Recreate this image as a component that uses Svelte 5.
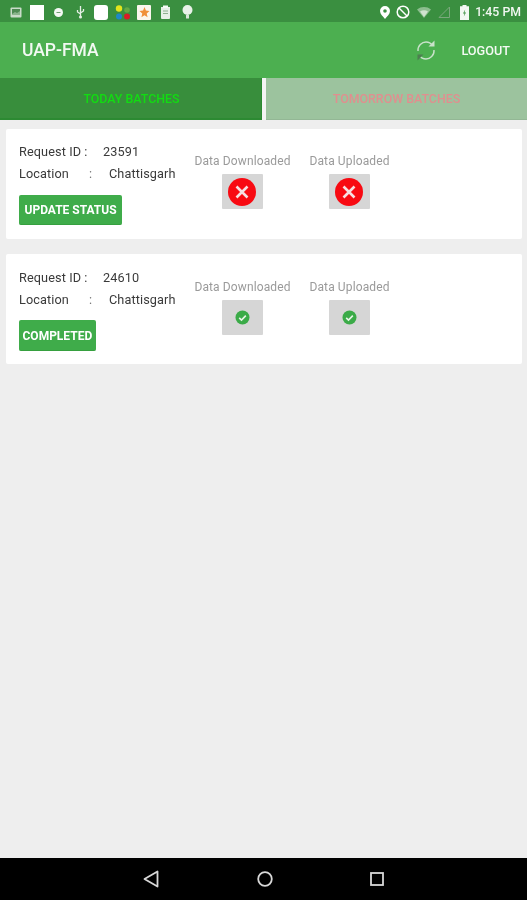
<script>
  const batches = [
    { id: "23591", location: "Chattisgarh", action: "UPDATE STATUS", done: false },
    { id: "24610", location: "Chattisgarh", action: "COMPLETED", done: true }
  ];
</script>

<div class="screen">
  <div class="statusbar">
    <div class="notifs">
      <svg class="n-img" width="12" height="11" viewBox="0 0 12 11"><rect x="0.5" y="0.5" width="11" height="10" rx="1" fill="#c9dcc9"/><path d="M2 2h8v5H2z" fill="#4d8a52"/><path d="M2 7l3-2 2 1 3-2v4H2z" fill="#8ab58c"/></svg>
      <span class="blank sq"></span>
      <svg class="n-dot" width="9" height="9" viewBox="0 0 9 9"><circle cx="4.5" cy="4.5" r="4.5" fill="#f4f8f4"/><path d="M2.5 4.5h4" stroke="#6f9f72" stroke-width="1"/></svg>
      <svg class="n-usb" width="9" height="14" viewBox="0 0 9 14"><path d="M4.5 1v12M4.5 9L1.5 7V5M4.5 8L7.5 6V4" fill="none" stroke="#e6f0e6" stroke-width="1.3"/><circle cx="4.5" cy="12" r="1.5" fill="#e6f0e6"/></svg>
      <span class="blank rnd"></span>
      <svg class="n-apps" width="16" height="15" viewBox="0 0 16 15"><circle cx="4" cy="3.5" r="3.2" fill="#e4e41c"/><circle cx="12" cy="5" r="2.8" fill="#64a844"/><circle cx="4" cy="11.5" r="3" fill="#1e88c8"/><circle cx="12" cy="11.5" r="3" fill="#d81c28"/></svg>
      <svg class="n-star" width="14" height="15" viewBox="0 0 14 15"><rect width="14" height="15" rx="1" fill="#fbf6ee"/><path d="M7.5 2l1.4 3.6 3.6.4-2.8 2.4.9 3.8-3.1-2-3.1 2 .9-3.8L2.500 6l3.600-.4z" fill="#f0903a"/></svg>
      <svg class="n-clip" width="11" height="14" viewBox="0 0 11 14"><path d="M1 2h9v11a1 1 0 0 1-1 1H2a1 1 0 0 1-1-1z" fill="#e6efe6"/><path d="M3 0.500h5v2.500H3z" fill="#f6faf6"/><path d="M3 6h5M3 8.500h5" stroke="#8db08f"/></svg>
      <svg class="n-bulb" width="11" height="14" viewBox="0 0 11 14"><circle cx="5.500" cy="5" r="5" fill="#e8f2e8"/><path d="M4 10h3v3.500H4z" fill="#d8e6d8"/></svg>
    </div>
    <div class="sys">
      <svg class="s-pin" width="10" height="13" viewBox="0 0 10 13"><path fill-rule="evenodd" d="M5 0a5 5 0 0 1 5 5c0 3-3 5.500-5 8-2-2.500-5-5-5-8a5 5 0 0 1 5-5zm0 3.200a1.800 1.800 0 1 0 0 3.600 1.800 1.800 0 0 0 0-3.600z" fill="#fff"/></svg>
      <svg width="14" height="14" viewBox="0 0 14 14"><circle cx="7" cy="7" r="5.800" fill="none" stroke="#fff" stroke-width="1.500"/><path d="M3 3l8 8" stroke="#fff" stroke-width="1.500"/></svg>
      <svg width="14" height="11" viewBox="0 0 14 11"><path d="M0 2.500C4 -.8 10 -.8 14 2.500L7 11z" fill="#8cbd8e"/><path d="M3 4.500c2.500-1.600 5.500-1.600 8 0L7 10z" fill="#cfe3cf"/></svg>
      <svg class="s-tri" width="12" height="12" viewBox="0 0 12 12"><path d="M11.500 1v10.500H1z" fill="none" stroke="#7aa87c" stroke-width="1"/></svg>
      <svg width="9" height="15" viewBox="0 0 9 15"><path fill-rule="evenodd" d="M2.500 0h4v1.300H9V15H0V1.300h2.500z" fill="#f4f8f4"/><path d="M5.200 4.500L3 8.500h1.500l-.7 3L6 7.500H4.500z" fill="#3b8d40"/></svg>
      <span class="clock">1:45 PM</span>
    </div>
  </div>

  <header class="toolbar">
    <span class="title">UAP-FMA</span>
    <div class="actions">
      <svg width="22" height="23" viewBox="0 0 22 23"><g fill="none" stroke="#c9e2ca" stroke-width="1.400"><path d="M3 12C2.500 6.500 7 3 11 3c3 0 5 1.200 6.500 3.500"/><path d="M19 11c.5 5.500-4 9-8 9-3 0-5-1.200-6.500-3.500"/></g><path d="M19.500 1.500v6h-6z" fill="#c9e2ca"/><path d="M2.500 21.500v-6h6z" fill="#4d7f50"/></svg>
      <span class="logout">LOGOUT</span>
    </div>
  </header>

  <nav class="tabs">
    <div class="tab today">TODAY BATCHES</div>
    <div class="tab tomorrow">TOMORROW BATCHES</div>
  </nav>

  <main class="list">
    {#each batches as b}
      <section class="card" class:done={b.done}>
        <div class="info">
          <div class="line"><span class="k-id">Request ID :</span><span class="v-id">{b.id}</span></div>
          <div class="line"><span class="k-loc">Location</span><span class="colon">:</span><span class="v-loc">{b.location}</span></div>
          <span class="btn">{b.action}</span>
        </div>
        {#each ["Data Downloaded", "Data Uploaded"] as label}
          <div class="state" class:up={label === "Data Uploaded"}>
            <span class="state-label">{label}</span>
            <span class="box">
              {#if b.done}
                <svg width="15" height="15" viewBox="0 0 15 15"><circle cx="7.500" cy="7.500" r="7" fill="#3bab48"/><path d="M4.200 7.800l2.300 2.200 4.300-4.400" fill="none" stroke="#e8f5e8" stroke-width="1.600"/></svg>
              {:else}
                <svg class="cross" width="28" height="28" viewBox="0 0 28 28"><circle cx="14" cy="14" r="14" fill="#f80a12"/><path d="M8.500 8.500l11 11M19.500 8.500l-11 11" stroke="#f6dfe2" stroke-width="2.600"/></svg>
              {/if}
            </span>
          </div>
        {/each}
      </section>
    {/each}
  </main>

  <footer class="navbar">
    <svg class="back" width="16" height="18" viewBox="0 0 16 18"><path d="M14.500 1.500v15L1.500 9z" fill="none" stroke="#d8d8d8" stroke-width="1.800" stroke-linejoin="round"/></svg>
    <svg width="16" height="16" viewBox="0 0 16 16"><circle cx="8" cy="8" r="6.800" fill="none" stroke="#d8d8d8" stroke-width="1.800"/></svg>
    <svg width="14" height="14" viewBox="0 0 14 14"><rect x="1" y="1" width="12" height="12" fill="none" stroke="#d8d8d8" stroke-width="1.800"/></svg>
  </footer>
</div>

<style>
  :global(body) {
    margin: 0;
    background: #eeeeee;
  }
  .screen {
    width: 527px;
    height: 900px;
    display: flex;
    flex-direction: column;
    font-family: Roboto, "Liberation Sans", sans-serif;
    background: #eeeeee;
    overflow: hidden;
    filter: blur(0.5px);
  }
  .statusbar {
    height: 22px;
    flex: none;
    background: #3a8f40;
    display: flex;
    align-items: center;
    justify-content: space-between;
    padding: 2px 6px 0 10px;
    box-sizing: border-box;
  }
  .notifs,
  .sys {
    display: flex;
    align-items: center;
  }
  .notifs svg,
  .notifs span,
  .sys svg {
    flex: none;
  }
  .blank {
    background: #fff;
    display: block;
    height: 15px;
    width: 14px;
  }
  .sq { margin-left: 8px; }
  .rnd { margin-left: 9px; border-radius: 3px; }
  .n-dot { margin-left: 10px; }
  .n-usb { margin-left: 13px; }
  .n-apps { margin-left: 7px; }
  .n-star { margin-left: 6px; }
  .n-clip { margin-left: 9px; }
  .n-bulb { margin-left: 11px; }
  .sys { gap: 7px; }
  .s-pin { margin-right: -1px; }
  .s-tri { margin-right: 3px; }
  .clock {
    color: #f2f7f2;
    font-size: 12.300px;
    font-weight: 500;
    margin-left: -1px;
  }
  .toolbar {
    height: 56px;
    flex: none;
    background: #4caf50;
    display: flex;
    align-items: center;
    justify-content: space-between;
    padding: 0 17px 0 22px;
    box-sizing: border-box;
    color: #fff;
  }
  .title {
    font-size: 17.500px;
    font-weight: 500;
    color: #f2f9f2;
  }
  .actions {
    display: flex;
    align-items: center;
    gap: 24px;
  }
  .logout {
    font-size: 12.700px;
    font-weight: 500;
    color: #f4faf4;
  }
  .tabs {
    height: 42px;
    flex: none;
    display: flex;
    gap: 4px;
    background: #f4f4f4;
  }
  .tab {
    display: flex;
    align-items: center;
    justify-content: center;
    font-size: 12.400px;
    font-weight: 500;
    box-sizing: border-box;
  }
  .today {
    width: 262px;
    flex: none;
    padding-left: 2px;
    background: #388e3c;
    color: #12dc12;
    border-bottom: 2px solid #2c8a32;
    border-right: 1px solid #2c8a32;
  }
  .tomorrow {
    flex: 1;
    background: #9cc39e;
    color: #e08f8f;
    border-bottom: 1px solid #93b795;
  }
  .list {
    flex: 1;
    display: flex;
    flex-direction: column;
    gap: 15px;
    padding: 9px 5px 0 6px;
  }
  .card {
    height: 110px;
    box-sizing: border-box;
    background: #fff;
    border-radius: 2px;
    display: flex;
    padding: 11px 13px 0;
  }
  .card.done {
    padding-top: 12px;
  }
  .info {
    width: 175px;
    flex: none;
    display: flex;
    flex-direction: column;
  }
  .line {
    height: 22px;
    display: flex;
    align-items: center;
    font-size: 12.700px;
    color: #3a3a3a;
    letter-spacing: 0.1px;
    white-space: nowrap;
  }
  .k-id { width: 84px; }
  .k-loc { width: 70px; }
  .colon { width: 20px; color: #777; }
  .btn {
    margin-top: 11px;
    width: fit-content;
    height: 30px;
    display: flex;
    align-items: center;
    padding: 1px 5.500px 0;
    background: #3fac4a;
    border-radius: 2px;
    border-bottom: 1px solid #36a03f;
    box-sizing: border-box;
    color: #fff;
    font-size: 12px;
    font-weight: 700;
    white-space: nowrap;
  }
  .done .btn {
    margin-top: 10px;
    height: 31px;
    padding: 1px 3.500px 0;
  }
  .state {
    width: 97px;
    display: flex;
    flex-direction: column;
    align-items: center;
    padding-top: 14px;
  }
  .state.up {
    width: 81px;
    margin-left: 18px;
  }
  .state-label {
    font-size: 12px;
    line-height: 14px;
    color: #9a9a9a;
    letter-spacing: 0.12px;
    white-space: nowrap;
  }
  .box {
    margin-top: 6px;
    width: 41px;
    height: 35px;
    background: #d6d6d6;
    border-radius: 1px;
    display: flex;
    align-items: center;
    justify-content: center;
  }
  .cross {
    margin-left: -1px;
  }
  .navbar {
    height: 42px;
    flex: none;
    background: #000;
    display: flex;
    align-items: center;
    justify-content: center;
    gap: 97px;
  }
  .back {
    margin: 0 1px 0 -1px;
  }
</style>
